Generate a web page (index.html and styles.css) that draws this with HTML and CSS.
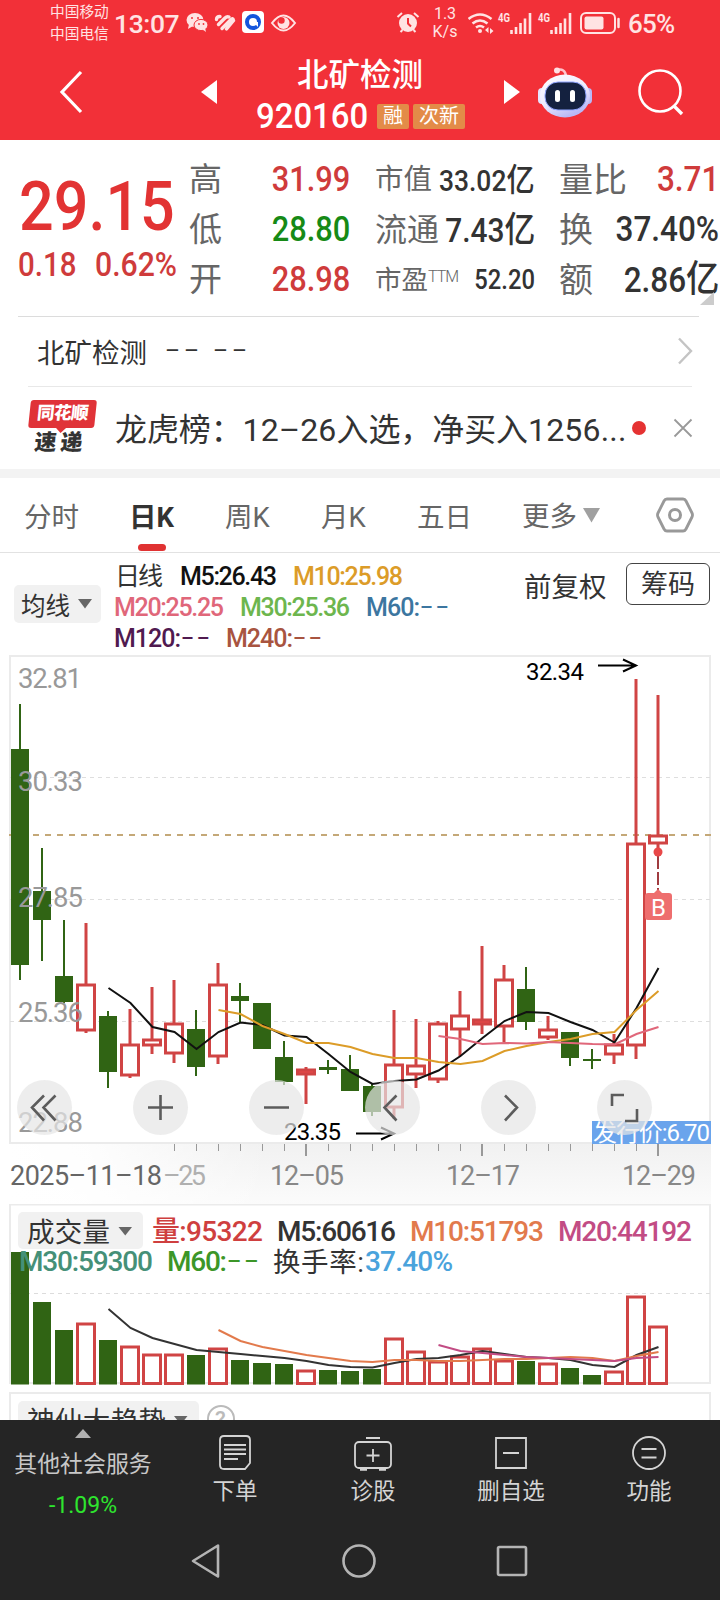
FILE: index.html
```html
<!DOCTYPE html>
<html lang="zh-CN">
<head>
    <meta charset="UTF-8">
    <meta name="viewport" content="width=device-width, initial-scale=1.0">
    <title>北矿检测 920160</title>
    <link rel="stylesheet" href="styles.css">
</head>
<body>
    <div class="phone">
        <div class="header">
            <div class="status">
                <div class="carrier">中国移动<br>中国电信</div>
                <div class="time">13:07</div>
                <svg class="status-icons" width="112" height="24" viewBox="186 11 112 24">
                    <g fill="#ffe3e3">
                        <ellipse cx="195" cy="20" rx="8.5" ry="7"/>
                        <path d="M189 24l-1 5 5-3z"/>
                        <ellipse cx="201" cy="25" rx="7" ry="5.6" stroke="#f23038" stroke-width="1"/>
                        <path d="M202 29l4 3-1-4z"/>
                    </g>
                    <g fill="#f23038"><circle cx="192" cy="18" r="1"/><circle cx="198" cy="18" r="1"/><circle cx="199" cy="24" r=".9"/><circle cx="203.500" cy="24" r=".9"/></g>
                    <g stroke="#ffe3e3" stroke-width="3.400" stroke-linecap="round" fill="none">
                        <path d="M216.500 19.500q0-3 3.500-3M218.500 24.500l6.500-6.500q2-2 4-1"/>
                        <path d="M222 28.500l8.500-8.500q2.500-3 3 0.500L226.500 29"/>
                    </g>
                    <rect x="242" y="11" width="22" height="22" rx="4" fill="#fff"/>
                    <circle cx="253" cy="22" r="6" fill="none" stroke="#1556dc" stroke-width="4"/>
                    <path d="M253 22h5v5z" fill="#fff"/>
                    <path d="M272 23q11.500-15 23 0q-11.500 15-23 0z" fill="none" stroke="#ffe3e3" stroke-width="2"/>
                    <circle cx="283.500" cy="23" r="6" fill="#ffe3e3"/>
                    <circle cx="281.500" cy="20.500" r="3.200" fill="#f23038"/>
                </svg>
                <div class="status-right">
                    <svg width="24" height="24" viewBox="0 0 24 24">
                        <circle cx="12" cy="12" r="9" fill="#ffe3e3"/>
                        <path d="M12 7v5.500l3 3" fill="none" stroke="#f23038" stroke-width="2"/>
                        <path d="M1.500 6l4.500-4M22.500 6l-4.500-4M4.500 21l2-2M19.500 21l-2-2" stroke="#ffe3e3" stroke-width="2"/>
                    </svg>
                    <div class="speed">1.3<br>K/s</div>
                    <svg width="106" height="24" viewBox="468 10 106 24">
                        <g fill="none" stroke="#ffe3e3" stroke-width="2.600">
                            <path d="M468.500 18q11.500-9 23 0M472.500 22.500q7.500-6 15 0M476 26.500q4-3 8 0"/>
                        </g>
                        <circle cx="480" cy="30" r="2" fill="#ffe3e3"/>
                        <path d="M488.500 26v6l-3.500-3zM490 27v6l3.500-3z" fill="#ffe3e3"/>
                        <g stroke="#ffe3e3" stroke-width="2.600">
                            <path d="M511.500 29v4M516 26v7M520.500 22v11M525 17.500v15.500M530 12v21"/>
                            <path d="M551.500 29v4M556 26v7M560.500 22v11M565 17.500v15.500M570 12v21"/>
                        </g>
                        <g fill="#ffe3e3" class="g4">
                            <text x="498" y="21" textLength="12" lengthAdjust="spacingAndGlyphs">4G</text>
                            <text x="538" y="21" textLength="12" lengthAdjust="spacingAndGlyphs">4G</text>
                        </g>
                    </svg>
                    <svg class="battery" width="42" height="24" viewBox="0 0 42 24">
                        <rect x="1" y="2" width="34" height="20" rx="5" fill="none" stroke="#ffe3e3" stroke-width="2"/>
                        <rect x="4.500" y="5.500" width="19" height="13" rx="2" fill="#ffe3e3"/>
                        <path d="M38.500 8v8" stroke="#ffe3e3" stroke-width="2.500" stroke-linecap="round"/>
                    </svg>
                    <div class="percent">65%</div>
                </div>
            </div>
            <div class="nav">
                <svg class="nav-back" width="24" height="46" viewBox="0 0 24 46"><path d="M22 2L3 22l19 20" fill="none" stroke="#fff" stroke-width="3.200"/></svg>
                <svg class="nav-prev" width="16" height="26" viewBox="0 0 16 26"><path d="M0 12L16 0v24z" fill="#fff"/></svg>
                <div class="title">
                    <div class="name">北矿检测</div>
                    <div class="code-row">
                        <span class="code num">920160</span>
                        <span class="tag">融</span>
                        <span class="tag">次新</span>
                    </div>
                </div>
                <svg class="nav-next" width="16" height="26" viewBox="0 0 16 26"><path d="M16 12L0 0v24z" fill="#fff"/></svg>
                <svg class="robot" width="54" height="54" viewBox="538 64 54 54">
                    <defs>
                        <linearGradient id="head" x1="0" y1="0" x2=".5" y2="1"><stop offset="0" stop-color="#fff"/><stop offset=".6" stop-color="#eceaff"/><stop offset="1" stop-color="#b9b8f6"/></linearGradient>
                    </defs>
                    <path d="M557 68q8-2 9 6" fill="none" stroke="#ffc4cc" stroke-width="2.500"/>
                    <circle cx="557" cy="68.500" r="3" fill="#ffe0e4"/>
                    <rect x="538" y="86" width="8" height="16" rx="4" fill="#e6e4ff"/>
                    <rect x="584" y="86" width="8" height="16" rx="4" fill="#b9b8f6"/>
                    <ellipse cx="565" cy="94" rx="25" ry="21.500" fill="url(#head)"/>
                    <rect x="545" y="80" width="41" height="28" rx="13" fill="#14213f" stroke="#8fa5ff" stroke-width="1"/>
                    <rect x="555" y="88" width="5" height="12" rx="2.500" fill="#fff"/>
                    <rect x="570" y="88" width="5" height="12" rx="2.500" fill="#fff"/>
                </svg>
                <svg class="search" width="46" height="48" viewBox="0 0 46 48"><circle cx="22" cy="22" r="20.500" fill="none" stroke="#fff" stroke-width="2.600"/><path d="M36 37l8 8" stroke="#fff" stroke-width="3.400"/></svg>
            </div>
        </div>

        <div class="quote">
            <div class="price-box">
                <div class="price num">29.15</div>
                <div class="change"><span class="num">0.18</span><span class="num">0.62%</span></div>
            </div>
            <div class="col col-a">
                <div class="cell"><span class="lbl">高</span><span class="val num red">31.99</span></div>
                <div class="cell"><span class="lbl">低</span><span class="val num green">28.80</span></div>
                <div class="cell"><span class="lbl">开</span><span class="val num red">28.98</span></div>
            </div>
            <div class="col col-b">
                <div class="cell size-m"><span class="lbl">市值</span><span class="val num">33.02<i>亿</i></span></div>
                <div class="cell size-l"><span class="lbl">流通</span><span class="val num">7.43<i>亿</i></span></div>
                <div class="cell size-s"><span class="lbl">市盈<sup>TTM</sup></span><span class="val num">52.20</span></div>
            </div>
            <div class="col col-c">
                <div class="cell"><span class="lbl">量比</span><span class="val num red">3.71</span></div>
                <div class="cell"><span class="lbl">换</span><span class="val num">37.40%</span></div>
                <div class="cell"><span class="lbl">额</span><span class="val num">2.86<i>亿</i></span></div>
            </div>
            <div class="corner"></div>
        </div>

        <div class="company">
            <span>北矿检测</span><span class="dashes">––</span><span class="dashes">––</span>
            <svg width="16" height="28" viewBox="0 0 16 28"><path d="M2 1.500L14 14 2 26.500" fill="none" stroke="#c4c4c4" stroke-width="2.400"/></svg>
        </div>
        <div class="news">
            <div class="logo">
                <div class="logo-top">同花顺</div>
                <div class="logo-bottom">速递</div>
            </div>
            <div class="news-text">龙虎榜：<span>12–26</span>入选，净买入<span>1256...</span></div>
            <div class="dot"></div>
            <svg width="20" height="20" viewBox="0 0 20 20"><path d="M1.500 1.500l17 17M18.500 1.500l-17 17" stroke="#999" stroke-width="1.800"/></svg>
        </div>

        <div class="tabs">
            <div class="tab">分时</div>
            <div class="tab active">日K</div>
            <div class="tab">周K</div>
            <div class="tab">月K</div>
            <div class="tab">五日</div>
            <div class="tab more"><span>更多</span><svg width="18" height="15" viewBox="0 0 18 15"><path d="M0 0h17L8.500 14.500z" fill="#a0a0a0"/></svg></div>
            <svg class="setting" width="38" height="36" viewBox="0 0 38 36"><path d="M11 2h16q2 0 3 2l6 12q1 2 0 4l-6 12q-1 2-3 2H11q-2 0-3-2L2 20q-1-2 0-4L8 4q1-2 3-2z" fill="none" stroke="#999" stroke-width="2.800"/><circle cx="19" cy="18" r="5.500" fill="none" stroke="#999" stroke-width="3"/></svg>
        </div>

        <div class="ma-bar">
            <div class="select">均线<svg width="14" height="10" viewBox="0 0 14 10"><path d="M0 0h14L7 9.500z" fill="#666"/></svg></div>
            <svg class="ma-legend" width="400" height="100" viewBox="112 554 400 100">
                <text x="115" y="585" textLength="48" class="cn" fill="#333">日线</text>
                <text x="180" y="584.500" textLength="97" fill="#111">M5:26.43</text>
                <text x="293" y="584.500" textLength="110" fill="#dc9c28">M10:25.98</text>
                <text x="114" y="615.500" textLength="110" fill="#e0677a">M20:25.25</text>
                <text x="240" y="615.500" textLength="110" fill="#6db64e">M30:25.36</text>
                <text x="366" y="615.500" textLength="54" fill="#3c76a0">M60:</text>
                <text x="420" y="614" class="dash" fill="#3c76a0">––</text>
                <text x="114" y="646.500" textLength="67" fill="#501a50">M120:</text>
                <text x="181" y="645" class="dash" fill="#501a50">––</text>
                <text x="226" y="646.500" textLength="67" fill="#a85440">M240:</text>
                <text x="293" y="645" class="dash" fill="#a85440">––</text>
            </svg>
            <div class="adjust">前复权</div>
            <div class="chip">筹码</div>
        </div>

        <svg class="kline" id="kline" width="720" height="549" viewBox="0 655 720 549">
            <defs>
                <linearGradient id="axisbg" x1="0" y1="0" x2="0" y2="1"><stop offset="0" stop-color="#f1f1f1"/><stop offset="1" stop-color="#fbfbfb"/></linearGradient>
                <linearGradient id="fade" x1="0" x2="1" y1="0" y2="0"><stop offset="0" stop-color="#fff"/><stop offset=".3" stop-color="#fff" stop-opacity=".9"/><stop offset="1" stop-color="#fff" stop-opacity="0"/></linearGradient>
            </defs>
            <rect x="9" y="1144" width="702" height="60" fill="url(#axisbg)"/>
            <rect x="9" y="1144" width="260" height="60" fill="url(#fade)"/>
            <rect x="10" y="656" width="700" height="487" fill="none" stroke="#ebebeb" stroke-width="2"/>
            <g stroke="#dedede" stroke-dasharray="4 4"><path d="M10 777.500h700M10 899.500h700M10 1021.500h700"/></g>
            <path d="M9 835h702" stroke="#c4a878" stroke-width="2" stroke-dasharray="6 6"/>
            <g id="candles"></g>
            <g class="price-axis">
                <text x="18" y="688" textLength="64">32.81</text>
                <text x="18" y="791" textLength="65">30.33</text>
                <text x="18" y="907" textLength="65">27.85</text>
                <text x="18" y="1022" textLength="65">25.36</text>
                <text x="18" y="1132" textLength="65">22.88</text>
            </g>
            <g id="ma"></g>
            <g class="peak">
                <text x="526" y="680" textLength="58">32.34</text>
                <path d="M598 665.500h37M623 659.500l13 6-13 6"/>
                <text x="284" y="1140" textLength="57">23.35</text>
                <path d="M356 1133.500h37M381 1127.500l13 6-13 6"/>
            </g>
            <path d="M658 856v34" stroke="#a03c40" stroke-width="2" stroke-dasharray="13 3"/>
            <circle cx="658" cy="852" r="4.500" fill="#e84848"/>
            <path d="M648 893h6l4-4 4 4h7q3 0 3 3v21q0 3-3 3h-21q-3 0-3-3v-21q0-3 3-3z" fill="#ee6e6e"/>
            <text x="658.500" y="916" class="buy">B</text>
            <rect x="592" y="1121" width="119" height="23" fill="#6aa4ec"/>
            <text x="593" y="1141" class="issue" textLength="117">发行价:6.70</text>
            <g id="ticks" stroke="#999"></g>
            <g class="dates">
                <text x="10" y="1184.500" textLength="152" fill="#666">2025–11–18</text>
                <text x="163" y="1184.500" textLength="43" fill="#b0b0b0">–25</text>
                <text x="270" y="1184.500" textLength="74">12–05</text>
                <text x="446" y="1184.500" textLength="74">12–17</text>
                <text x="622" y="1184.500" textLength="74">12–29</text>
            </g>
            <g fill="#e5e5e5" fill-opacity=".7">
                <circle cx="44.500" cy="1107.500" r="27.500"/><circle cx="160.500" cy="1107.500" r="27.500"/><circle cx="276.500" cy="1107.500" r="27.500"/>
                <circle cx="392.500" cy="1107.500" r="27.500"/><circle cx="508.500" cy="1107.500" r="27.500"/><circle cx="624.500" cy="1107.500" r="27.500"/>
            </g>
            <path d="M44 1095.500l-12 12 12 13M55.500 1095.500l-12 12 12 13M148 1107.500h25M160.500 1095v25M264 1107.500h25M396.500 1095.500l-12 12 12 13M505 1095.500l12 12-12 13M612 1106v-11h12M637 1109v12h-12" fill="none" stroke="#5c5c5c" stroke-width="2.600"/>
        </svg>

        <svg class="volume" width="720" height="216" viewBox="0 1204 720 216">
            <rect x="10" y="1204.500" width="700" height="178.500" fill="none" stroke="#ebebeb" stroke-width="2"/>
            <path d="M10 1293.500h700" stroke="#dcdcdc" stroke-dasharray="4 4"/>
            <rect x="18" y="1212" width="125" height="37" rx="5" fill="#f1f1f1"/>
            <text x="27" y="1242" class="big" textLength="83">成交量</text>
            <path d="M118.500 1227h13.500l-6.750 8.500z" fill="#666"/>
            <g id="bars"></g>
            <text x="152" y="1241" textLength="111" fill="#cf3f3f">量:95322</text>
            <text x="277" y="1241" textLength="119" fill="#333">M5:60616</text>
            <text x="410" y="1241" textLength="134" fill="#e27a4c">M10:51793</text>
            <text x="558" y="1241" textLength="134" fill="#c24c84">M20:44192</text>
            <text x="19" y="1271" textLength="134" fill="#459078">M30:59300</text>
            <text x="167" y="1271" textLength="60" fill="#3c9628">M60:</text>
            <text x="227" y="1269" class="dash" fill="#3c9628">––</text>
            <text x="273" y="1272" class="big" textLength="91">换手率:</text>
            <text x="365" y="1271" textLength="88" fill="#4aa3dc">37.40%</text>
            <path d="M10 1420v-27h700v27" fill="none" stroke="#ebebeb" stroke-width="2"/>
            <rect x="18" y="1401" width="181" height="37" rx="5" fill="#f1f1f1"/>
            <text x="27" y="1431" class="big" textLength="139">神仙大趋势</text>
            <path d="M174 1416h13.500l-6.750 8.500z" fill="#666"/>
            <circle cx="221" cy="1419" r="13" fill="none" stroke="#bbb" stroke-width="2"/>
            <text x="215" y="1427" class="help" fill="#bbb">?</text>
        </svg>

        <div class="bottom">
            <div class="item index">
                <svg width="16" height="9" viewBox="0 0 16 9"><path d="M8 0l8 9H0z" fill="#b0b0b0"/></svg>
                <div class="idx-name">其他社会服务</div>
                <div class="idx-val">-1.09%</div>
            </div>
            <div class="item">
                <svg width="40" height="38" viewBox="0 0 40 38"><g fill="none" stroke="#d4d4d4" stroke-width="1.800"><path d="M9 2h22q4 0 4 4v23l-5 6H9q-4 0-4-4V6q0-4 4-4zM9 11h22M9 15.500h22M9 20h22M9 25h14"/></g></svg>
                下单
            </div>
            <div class="item">
                <svg width="40" height="38" viewBox="0 0 40 38"><g fill="none" stroke="#d4d4d4" stroke-width="1.800"><rect x="2" y="8" width="36" height="26" rx="4"/><path d="M13 4h14M20 15v13M13.500 21.500h13"/><path d="M7 35.500h7M26 35.500h7" stroke-width="2.500"/></g></svg>
                诊股
            </div>
            <div class="item">
                <svg width="40" height="38" viewBox="0 0 40 38"><g fill="none" stroke="#d4d4d4" stroke-width="1.800"><path d="M5 4h30v30H5zM12 19h16"/></g></svg>
                删自选
            </div>
            <div class="item">
                <svg width="40" height="38" viewBox="0 0 40 38"><g fill="none" stroke="#d4d4d4" stroke-width="1.800"><circle cx="20" cy="19" r="16"/><path d="M12.500 15h15M12.500 23.500h15"/></g></svg>
                功能
            </div>
        </div>
        <div class="sysnav">
            <svg width="30" height="36" viewBox="0 0 30 36"><path d="M27 2.500v31L2 18z" fill="none" stroke="#b4b4b4" stroke-width="2.600" stroke-linejoin="round"/></svg>
            <svg width="36" height="36" viewBox="0 0 36 36"><circle cx="18" cy="18" r="15.500" fill="none" stroke="#b4b4b4" stroke-width="2.600"/></svg>
            <svg width="32" height="32" viewBox="0 0 32 32"><rect x="2" y="2" width="28" height="28" rx="1.500" fill="none" stroke="#b4b4b4" stroke-width="2.600"/></svg>
        </div>
    </div>
    <script src="script.js"></script>
</body>
</html>
```
FILE: styles.css
```css
*{
    margin: 0;
    padding: 0;
    box-sizing: border-box;
}
body{
    width: 720px;
    background-color: white;
    font-family: Roboto, "Noto Sans CJK SC", sans-serif;
    color: #333;
}
svg{
    display: block;
    flex-shrink: 0;
}
.phone{
    width: 720px;
    height: 1600px;
    overflow: hidden;
    display: flex;
    flex-direction: column;
}
.phone > *{
    flex-shrink: 0;
}
.num{
    display: inline-block;
    font-weight: 500;
    transform: scaleX(.88);
    transform-origin: left;
    white-space: nowrap;
}
.red{
    color: #cf3b3b;
}
.green{
    color: #168a16;
}

/* header */
.header{
    height: 140px;
    background-color: #f23038;
    color: white;
}
.status{
    height: 46px;
    padding-left: 50px;
    display: flex;
    align-items: center;
    color: #ffe3e3;
}
.carrier{
    width: 64px;
    font-size: 14.7px;
    line-height: 22px;
    white-space: nowrap;
}
.time{
    width: 72px;
    font-size: 26.5px;
    letter-spacing: -0.4px;
}
.time, .percent{
    font-weight: 500;
}
.status-right{
    margin-left: 98px;
    display: flex;
    align-items: center;
}
.speed{
    width: 26px;
    margin: 0 10px 0 12px;
    font-size: 16px;
    line-height: 18px;
    text-align: center;
}
.g4{
    font-size: 12px;
    font-weight: bold;
}
.battery{
    margin-left: 6px;
}
.percent{
    margin-left: 6px;
    padding-top: 2px;
    font-size: 26px;
    letter-spacing: -.8px;
}
.nav{
    height: 94px;
    padding-left: 59px;
    display: flex;
    align-items: center;
}
.nav-prev{
    margin-left: 118px;
}
.title{
    width: 216px;
    margin-left: 39px;
    padding-top: 4px;
}
.name{
    padding-left: 41px;
    font-size: 31.5px;
    line-height: 43px;
    font-weight: 500;
}
.code-row{
    height: 40px;
    display: flex;
    align-items: center;
    gap: 4px;
}
.code{
    width: 117px;
    font-size: 35px;
    transform: scaleX(.94);
}
.tag{
    height: 25px;
    padding: 0 6px;
    font-size: 20px;
    line-height: 25px;
    border-radius: 2px;
    background-color: #e38b48;
    white-space: nowrap;
}
.nav-next{
    margin-left: 32px;
}
.robot{
    margin-left: 18px;
}
.search{
    margin-left: 46px;
}

/* quote */
.quote{
    position: relative;
    height: 177px;
    padding: 15px 0 0 18px;
    display: flex;
}
.quote::after{
    content: "";
    position: absolute;
    left: 18px;
    right: 21px;
    bottom: 0;
    height: 1px;
    background-color: #dcdcdc;
}
.price-box{
    width: 171px;
    color: #e23333;
}
.price{
    height: 82px;
    padding-top: 11px;
    font-size: 69px;
    line-height: 82px;
    transform: translateX(1px) scaleX(.885);
}
.change{
    display: flex;
    padding-top: 10px;
    font-size: 33.5px;
    line-height: 36px;
    color: #cf3b3b;
}
.change span{
    transform: scaleX(.9);
}
.change span:first-child{
    width: 77px;
    transform: scaleX(.88);
}
.col .cell{
    height: 50px;
    display: flex;
    justify-content: space-between;
    align-items: center;
    font-size: 33px;
    line-height: 50px;
}
.lbl{
    color: #666;
    white-space: nowrap;
}
.val{
    margin-left: -30px;
    font-size: 35px;
    transform-origin: right;
}
.val i{
    font-style: normal;
    font-size: 37px;
}
.col-a{
    width: 161px;
}
.col-b{
    width: 160px;
    margin-left: 25px;
}
.col-c{
    width: 160px;
    margin-left: 24px;
}
.col-b .size-m{
    font-size: 28.5px;
}
.size-m .val{
    font-size: 30px;
}
.size-m .val i{
    font-size: 32px;
}
.col-b .size-l{
    font-size: 32px;
}
.size-l .val{
    font-size: 34px;
}
.size-l .val i{
    font-size: 35px;
}
.col-b .size-s{
    font-size: 26.5px;
}
.size-s .val{
    font-size: 27px;
}
.col-c .lbl{
    font-size: 34px;
}
.col-c .num{
    transform: scaleX(.9);
}
sup{
    font-size: 16px;
    font-weight: 300;
    letter-spacing: -1px;
    line-height: 0;
    vertical-align: 7px;
}
.corner{
    position: absolute;
    right: 6px;
    bottom: 12px;
    border-left: 14px solid transparent;
    border-bottom: 13px solid #ccc;
}

/* company, news */
.company{
    height: 70px;
    padding: 0 27px 2px 9px;
    margin-left: 28px;
    display: flex;
    align-items: center;
    font-size: 27.5px;
    background: linear-gradient(#e8e8e8, #e8e8e8) left bottom / 664px 1px no-repeat;
}
.company svg{
    margin-left: auto;
}
.dashes{
    width: 30px;
    margin-left: 18px;
    font-size: 23px;
    letter-spacing: 4px;
}
.news{
    height: 82px;
    padding-left: 28px;
    display: flex;
    align-items: center;
}
.logo{
    width: 66px;
    margin-right: 2px;
    text-align: center;
    font-weight: 900;
    transform: skewX(-6deg);
}
.logo-top{
    position: relative;
    height: 28px;
    font-size: 17.5px;
    line-height: 27px;
    letter-spacing: -.5px;
    color: white;
    background-color: #e03338;
    border-radius: 3px;
}
.logo-top::after{
    content: "";
    position: absolute;
    left: 28px;
    top: 28px;
    border: 5px solid transparent;
    border-top-color: #e03338;
    border-bottom: 0;
}
.logo-bottom{
    font-size: 22px;
    line-height: 29px;
    letter-spacing: 4px;
    padding-left: 2px;
}
.news-text{
    width: 512px;
    margin-left: 19px;
    padding-bottom: 3px;
    font-size: 32px;
    letter-spacing: -.1px;
    white-space: nowrap;
}
.news-text span{
    letter-spacing: .2px;
}
.dot{
    width: 14px;
    height: 14px;
    margin: 0 27px 0 5px;
    border-radius: 50%;
    background-color: #e53232;
}

/* tabs */
.tabs{
    height: 84px;
    padding-left: 24px;
    display: flex;
    align-items: center;
    border-top: 9px solid #f3f3f3;
    border-bottom: 1px solid #e2e2e2;
    font-size: 27.5px;
    color: #666;
}
.tab{
    position: relative;
    height: 74px;
    line-height: 79px;
    width: 96px;
    white-space: nowrap;
}
.tab:first-child{
    width: 105px;
}
.active{
    font-weight: bold;
    color: #333;
}
.active::after{
    content: "";
    position: absolute;
    left: 9px;
    bottom: 1px;
    width: 28px;
    height: 7px;
    border-radius: 4px;
    background-color: #e03232;
}
.more{
    width: 134px;
    margin-left: 9px;
    display: flex;
    align-items: center;
    gap: 6px;
}
.more span{
    padding-top: 3px;
}

/* moving average row */
.ma-bar{
    height: 102px;
    padding-left: 14px;
    display: flex;
}
.select{
    width: 87px;
    height: 38px;
    flex-shrink: 0;
    margin-top: 32px;
    padding-left: 7px;
    display: flex;
    align-items: center;
    gap: 8px;
    font-size: 24.5px;
    background-color: #f1f1f1;
    border-radius: 5px;
    white-space: nowrap;
}
.ma-legend{
    margin: 1px 0 0 11px;
}
.ma-legend, .volume{
    font-weight: 500;
}
.ma-legend text{
    font-size: 25px;
}
.ma-legend .cn{
    font-weight: 400;
}
.ma-legend .dash{
    font-size: 20px;
    letter-spacing: 3px;
}
.adjust{
    width: 101px;
    flex-shrink: 0;
    margin-left: 12px;
    padding-top: 15px;
    font-size: 27.5px;
    line-height: 40px;
}
.chip{
    width: 84px;
    height: 42px;
    flex-shrink: 0;
    margin: 10px 0 0 1px;
    border: 1px solid #444;
    border-radius: 6px;
    font-size: 27px;
    line-height: 43px;
    text-align: center;
}

/* charts */
.price-axis{
    font-size: 27.5px;
    fill: #999;
}
.peak text{
    font-size: 24px;
}
.peak path{
    fill: none;
    stroke: black;
    stroke-width: 2;
}
.buy{
    font-size: 24px;
    fill: white;
    text-anchor: middle;
}
.issue{
    font-size: 24px;
    fill: white;
}
.dates{
    font-size: 27px;
    fill: #888;
}
.volume text{
    font-size: 28px;
}
.volume .big{
    font-size: 27.5px;
    font-weight: 400;
    fill: #333;
}
.volume .help{
    font-size: 22px;
}
.volume .dash{
    font-size: 22px;
    letter-spacing: 3px;
}

/* bottom */
.bottom{
    height: 104px;
    padding-left: 166px;
    display: grid;
    grid-template-columns: 138px 138px 138px 138px;
    position: relative;
    background-color: #252525;
    color: #d4d4d4;
    font-size: 22.5px;
}
.item{
    padding-top: 14px;
    display: flex;
    flex-direction: column;
    align-items: center;
    line-height: 39px;
}
.index{
    position: absolute;
    left: 0;
    width: 166px;
    padding-top: 9px;
    color: #c8c8c8;
}
.idx-name{
    padding-top: 7px;
    font-size: 22.9px;
}
.idx-val{
    padding-top: 2px;
    font-size: 23px;
    color: #2ee62e;
}
.sysnav{
    height: 76px;
    padding: 0 192px 2px 191px;
    display: flex;
    justify-content: space-between;
    align-items: center;
    background-color: #252525;
}
```
FILE: script.js
```js
// values are [red, high, low, top, bottom, volume top], all but the first are y positions
let candles = [
    [0, 704, 980, 749, 965, 1252], [0, 848, 961, 891, 920, 1302], [0, 920, 1003, 976, 1002, 1330],
    [1, 923, 1033, 984, 1031, 1323], [0, 1011, 1088, 1016, 1072, 1340], [1, 1009, 1078, 1044, 1076, 1346],
    [1, 987, 1054, 1039, 1046, 1354], [1, 980, 1063, 1023, 1054, 1354], [0, 1010, 1076, 1029, 1067, 1355],
    [1, 963, 1064, 984, 1057, 1348], [0, 983, 1023, 996, 1001, 1360], [0, 1003, 1049, 1003, 1049, 1363],
    [0, 1041, 1085, 1057, 1082, 1364], [1, 1067, 1104, 1069, 1075, 1370], [0, 1060, 1074, 1067, 1070, 1370],
    [0, 1055, 1091, 1069, 1091, 1371], [0, 1083, 1116, 1086, 1112, 1369], [1, 1010, 1119, 1064, 1108, 1338],
    [1, 1019, 1088, 1065, 1075, 1351], [1, 1021, 1083, 1023, 1080, 1361], [1, 991, 1056, 1015, 1030, 1356],
    [1, 946, 1034, 1019, 1025, 1348], [1, 965, 1042, 979, 1027, 1360], [0, 967, 1030, 989, 1022, 1361],
    [1, 1016, 1040, 1029, 1038, 1363], [0, 1032, 1066, 1032, 1058, 1368], [0, 1049, 1069, 1059, 1061, 1375],
    [1, 1034, 1064, 1044, 1055, 1371], [1, 679, 1059, 843, 1046, 1296], [1, 695, 856, 835, 844, 1326]
]
// [color, index of first point, y positions]
let priceLines = [
    ["#111", 4, [988, 1003, 1027, 1032, 1049, 1032, 1022.5, 1025, 1035.5, 1037, 1054, 1072, 1084, 1081, 1079.5, 1070.5, 1056, 1038, 1021, 1012, 1013, 1022, 1030, 1042.5, 1008, 968]],
    ["#dc9c28", 9, [1010, 1014, 1026, 1034, 1043, 1043, 1047, 1054, 1058, 1058, 1062, 1064, 1061, 1051, 1046, 1042, 1039, 1034, 1032, 1010, 991]],
    ["#e0677a", 19, [1036, 1039, 1044, 1043, 1043.5, 1042, 1043, 1044, 1044.5, 1034, 1027]]
]
let volumeLines = [
    ["#333", 4, [1309, 1328, 1338, 1344, 1350, 1352, 1354, 1356, 1358, 1361, 1365, 1367, 1367.5, 1363, 1359, 1358, 1355, 1351, 1354, 1357, 1358, 1360, 1365, 1367, 1355, 1347]],
    ["#e27a4c", 9, [1330, 1341, 1347, 1351, 1355, 1358, 1361, 1362, 1360, 1360, 1361, 1361, 1360, 1359, 1359, 1358, 1357, 1358, 1361, 1356, 1352]],
    ["#c24c84", 19, [1345, 1351, 1353, 1355, 1357, 1358, 1359, 1360, 1361, 1358, 1357]]
]

function body(up, x, top, bottom){
    if(up){
        return `<rect x="${x - 8.5}" y="${top + 1}" width="17" height="${Math.max(bottom - top - 2, 1)}" fill="${bottom - top < 7 ? "#e84848" : "white"}" stroke="#d04444" stroke-width="3"/>`
    }
    return `<rect x="${x - 9}" y="${top}" width="18" height="${bottom - top}" fill="#306414"/>`
}
function lines(list){
    return list.map(([color, start, ys]) => {
        let points = ys.map((y, i) => `${20.5 + (start + i) * 22},${y}`).join(" ")
        return `<polyline points="${points}" fill="none" stroke="${color}" stroke-width="2"/>`
    }).join("")
}

let k = ""
let v = ""
let t = ""
candles.forEach(([up, high, low, top, bottom, vol], i) => {
    let x = 20 + i * 22
    k += `<path d="M${x} ${high}V${top}M${x} ${bottom}V${low}" stroke="${up ? "#d04444" : "#306414"}" stroke-width="${up ? 3 : 2}"/>`
    k += body(up, x, top, bottom)
    v += body(up, x, vol, 1384.5)
    if(i > 6){
        let major = (i == 13 || i == 21 || i == 29)
        t += `<path d="M${x + (major ? 0 : 0.5)} 1144v${major ? 12 : 7}" stroke-width="${major ? 2 : 1}"/>`
    }
})
document.getElementById("candles").innerHTML = k
document.getElementById("ma").innerHTML = lines(priceLines)
document.getElementById("bars").innerHTML = v + lines(volumeLines)
document.getElementById("ticks").innerHTML = t
```
